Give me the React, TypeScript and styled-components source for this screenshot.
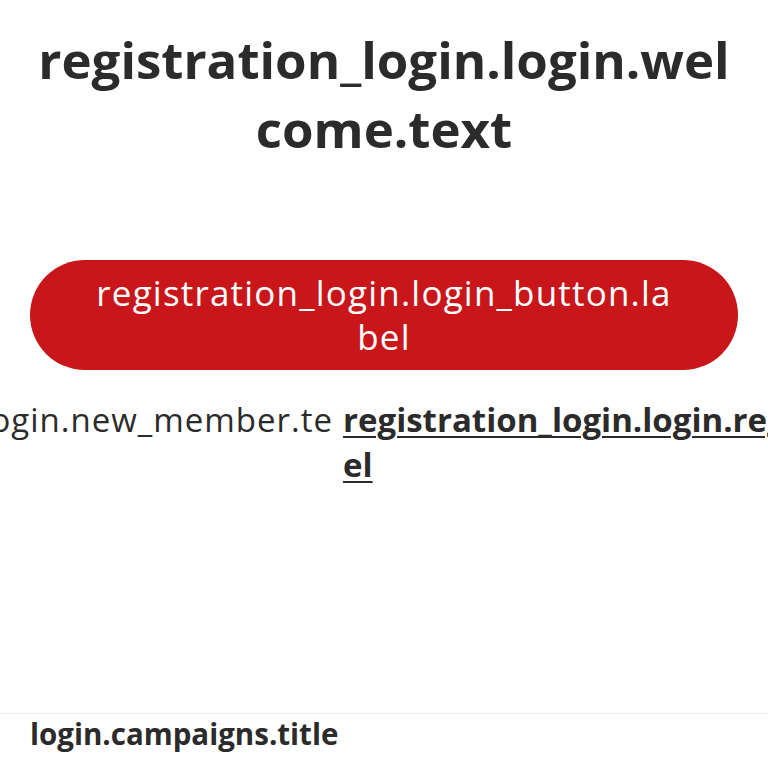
import React from "react";
import styled, { createGlobalStyle } from "styled-components";

const GlobalStyle = createGlobalStyle`
  html, body {
    margin: 0;
    padding: 0;
    background: #ffffff;
    overflow-x: hidden;
  }
  body {
    font-family: "Open Sans", "Noto Sans", sans-serif;
    color: #2b2b2b;
  }
  * { box-sizing: border-box; }
`;

const Page = styled.main`
  min-height: 100vh;
  display: flex;
  flex-direction: column;
`;

const Content = styled.section`
  display: flex;
  flex-direction: column;
  padding: 25px 30px 0;
`;

const Heading = styled.h1`
  margin: 0;
  font-size: 51px;
  line-height: 69px;
  font-weight: 700;
  text-align: center;
  word-break: break-all;
  color: #2b2b2b;
`;

const LoginButton = styled.button`
  margin-top: 97px;
  width: 100%;
  height: 110px;
  padding: 0 64px 1px;
  border: none;
  border-radius: 55px;
  background: #c8161b;
  color: #ffffff;
  font-family: "Open Sans", "Noto Sans", sans-serif;
  font-size: 35px;
  line-height: 44px;
  letter-spacing: 1.2px;
  font-weight: 400;
  text-align: center;
  word-break: break-all;
  cursor: pointer;
`;

const RegisterRow = styled.div`
  margin-top: 27px;
  display: grid;
  grid-template-columns: 303px 585px;
  column-gap: 10px;
  font-size: 33px;
  line-height: 45px;
`;

const NewMemberCell = styled.div`
  display: flex;
  justify-content: flex-end;
  min-width: 0;
`;

const NewMemberText = styled.span`
  white-space: nowrap;
  flex: none;
  letter-spacing: 1px;
  color: #2b2b2b;
`;

const RegisterLink = styled.a`
  font-weight: 700;
  color: #2b2b2b;
  text-decoration: underline;
  text-underline-offset: 4px;
  text-decoration-thickness: 2px;
  word-break: break-all;
`;

const Campaigns = styled.footer`
  margin-top: auto;
  border-top: 1px solid #ececec;
  padding: 0 30px 14px;
`;

const CampaignsTitle = styled.h2`
  margin: 0;
  font-size: 29.5px;
  line-height: 40px;
  font-weight: 700;
  color: #2b2b2b;
`;

export default function App() {
  return (
    <>
      <GlobalStyle />
      <Page>
        <Content>
          <Heading>registration_login.login.welcome.text</Heading>
          <LoginButton type="button">registration_login.login_button.label</LoginButton>
          <RegisterRow>
            <NewMemberCell>
              <NewMemberText>registration_login.login.new_member.te</NewMemberText>
            </NewMemberCell>
            <RegisterLink href="#">registration_login.login.register.label</RegisterLink>
          </RegisterRow>
        </Content>
        <Campaigns>
          <CampaignsTitle>login.campaigns.title</CampaignsTitle>
        </Campaigns>
      </Page>
    </>
  );
}
